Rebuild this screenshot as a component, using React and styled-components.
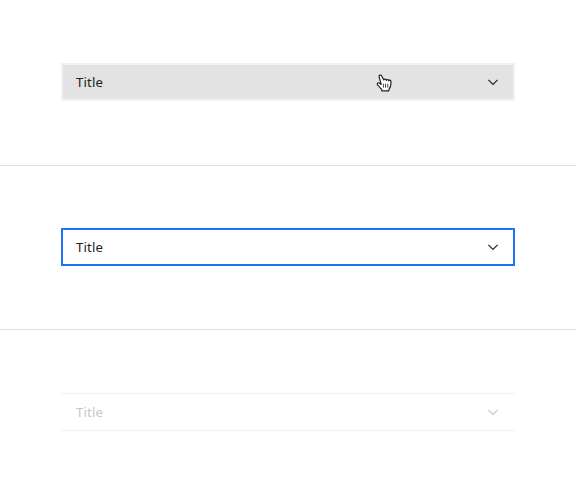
import React from "react";
import styled, { createGlobalStyle, css } from "styled-components";

const GlobalStyle = createGlobalStyle`
  body {
    margin: 0;
    background: #ffffff;
    font-family: "Noto Sans", sans-serif;
  }
`;

const Page = styled.main`
  display: grid;
  grid-template-rows: 166px 164px 165px;
  height: 495px;
  overflow: hidden;
`;

const Example = styled.section`
  box-sizing: border-box;
  padding: ${({ $top }) => $top}px 61px 0;
  border-bottom: ${({ $last }) => ($last ? "none" : "1px solid #e0e0e0")};
`;

const states = {
  hover: css`
    background: #e3e3e3;
    border: 2px solid #f2f2f2;
  `,
  focus: css`
    border: 2px solid #1f70f5;
  `,
  disabled: css`
    color: #c6c6c6;
    border: solid #f0f0f0;
    border-width: 1px 0;
    padding: 0 16.4px 0 15px;
  `,
};

const Header = styled.button`
  position: relative;
  box-sizing: border-box;
  display: flex;
  align-items: center;
  justify-content: space-between;
  width: 100%;
  height: 38px;
  margin: 0;
  padding: 0 14.4px 0 13px;
  border-radius: 0;
  background: #ffffff;
  color: #222222;
  font: 400 13.2px/18px "Noto Sans", sans-serif;
  ${({ $state }) => states[$state]}
`;

const Title = styled.span`
  letter-spacing: 0.15px;
`;

const Chevron = styled.svg`
  width: 12px;
  height: 8px;
  fill: none;
  stroke: currentColor;
  stroke-width: 1.15;
`;

const Pointer = styled.svg`
  position: absolute;
  left: 313px;
  top: 8.5px;
  width: 17px;
  height: 18px;
`;

function AccordionHeader({ state, children }) {
  return (
    <Header $state={state} disabled={state === "disabled"}>
      <Title>Title</Title>
      <Chevron viewBox="0 0 12 8">
        <path d="M1.4 1.8 6 6.4l4.6-4.6" />
      </Chevron>
      {children}
    </Header>
  );
}

function HandPointer() {
  return (
    <Pointer viewBox="0 0 17 18">
      <path
        d="M5.2 10.4 3.5 9.2C2.4 8.4.8 9.2 1.3 10.4c.4.9 1.3 1.4 2 2.4.7 1.1 1.4 1.8 2.4 2.5l.2 1.5h6.9l.3-1.6c1.1-1.4 1.8-3.2 1.8-5.1V7.4c0-1.5-1.9-1.7-2.2-.6-.2-1.5-2.1-1.7-2.4-.5-.3-1.5-2.2-1.6-2.5-.4L5.7 2C5.1.5 2.7 1 3.1 2.8Z"
        fill="#ffffff"
        stroke="#222222"
        strokeWidth="1.2"
        strokeLinejoin="round"
      />
      <path
        d="M7.4 9.7v4M9.6 9.7v4M11.8 9.7v4"
        fill="none"
        stroke="#444444"
        strokeWidth="1"
      />
    </Pointer>
  );
}

export default function App() {
  return (
    <>
      <GlobalStyle />
      <Page>
        <Example $top={63}>
          <AccordionHeader state="hover">
            <HandPointer />
          </AccordionHeader>
        </Example>
        <Example $top={62}>
          <AccordionHeader state="focus" />
        </Example>
        <Example $top={63} $last>
          <AccordionHeader state="disabled" />
        </Example>
      </Page>
    </>
  );
}
